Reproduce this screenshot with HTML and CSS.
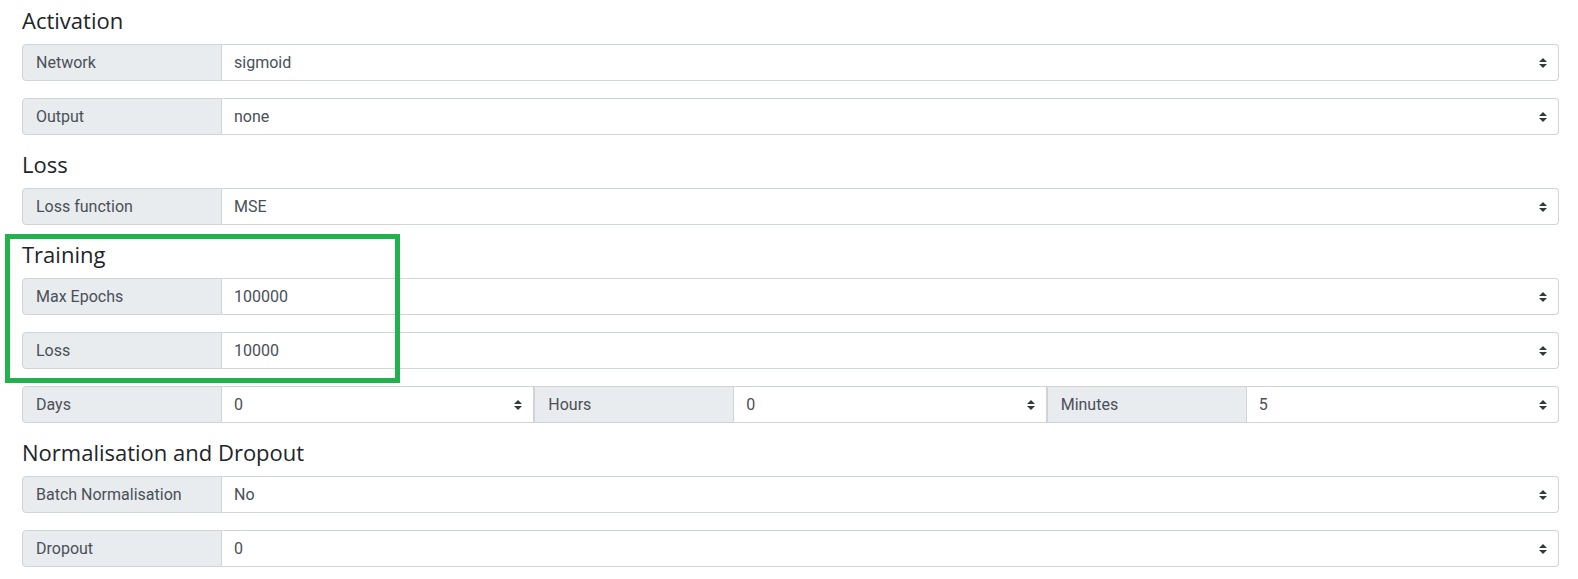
FILE: index.html
```html
<!DOCTYPE html>
<html lang="en">
<head>
<meta charset="utf-8">
<title>Network settings</title>
<link rel="stylesheet" href="styles.css">
</head>
<body>
<main class="form">
  <h5 class="section-title">Activation</h5>
  <div class="input-group">
    <span class="addon">Network</span>
    <div class="select-wrap last">
      <select class="custom-select"><option>sigmoid</option></select>
      <svg class="caret" viewBox="0 0 4 5" width="8" height="10"><path d="M2 0L0 2h4zm0 5L0 3h4z"/></svg>
    </div>
  </div>
  <div class="input-group">
    <span class="addon">Output</span>
    <div class="select-wrap last">
      <select class="custom-select"><option>none</option></select>
      <svg class="caret" viewBox="0 0 4 5" width="8" height="10"><path d="M2 0L0 2h4zm0 5L0 3h4z"/></svg>
    </div>
  </div>

  <h5 class="section-title">Loss</h5>
  <div class="input-group">
    <span class="addon">Loss function</span>
    <div class="select-wrap last">
      <select class="custom-select"><option>MSE</option></select>
      <svg class="caret" viewBox="0 0 4 5" width="8" height="10"><path d="M2 0L0 2h4zm0 5L0 3h4z"/></svg>
    </div>
  </div>

  <h5 class="section-title">Training</h5>
  <div class="input-group">
    <span class="addon">Max Epochs</span>
    <div class="select-wrap last">
      <select class="custom-select"><option>100000</option></select>
      <svg class="caret" viewBox="0 0 4 5" width="8" height="10"><path d="M2 0L0 2h4zm0 5L0 3h4z"/></svg>
    </div>
  </div>
  <div class="input-group">
    <span class="addon">Loss</span>
    <div class="select-wrap last">
      <select class="custom-select"><option>10000</option></select>
      <svg class="caret" viewBox="0 0 4 5" width="8" height="10"><path d="M2 0L0 2h4zm0 5L0 3h4z"/></svg>
    </div>
  </div>
  <div class="input-group triple">
    <span class="addon">Days</span>
    <div class="select-wrap">
      <select class="custom-select"><option>0</option></select>
      <svg class="caret" viewBox="0 0 4 5" width="8" height="10"><path d="M2 0L0 2h4zm0 5L0 3h4z"/></svg>
    </div>
    <span class="addon mid">Hours</span>
    <div class="select-wrap">
      <select class="custom-select"><option>0</option></select>
      <svg class="caret" viewBox="0 0 4 5" width="8" height="10"><path d="M2 0L0 2h4zm0 5L0 3h4z"/></svg>
    </div>
    <span class="addon mid">Minutes</span>
    <div class="select-wrap last">
      <select class="custom-select"><option>5</option></select>
      <svg class="caret" viewBox="0 0 4 5" width="8" height="10"><path d="M2 0L0 2h4zm0 5L0 3h4z"/></svg>
    </div>
  </div>

  <h5 class="section-title">Normalisation and Dropout</h5>
  <div class="input-group">
    <span class="addon">Batch Normalisation</span>
    <div class="select-wrap last">
      <select class="custom-select"><option>No</option></select>
      <svg class="caret" viewBox="0 0 4 5" width="8" height="10"><path d="M2 0L0 2h4zm0 5L0 3h4z"/></svg>
    </div>
  </div>
  <div class="input-group">
    <span class="addon">Dropout</span>
    <div class="select-wrap last">
      <select class="custom-select"><option>0</option></select>
      <svg class="caret" viewBox="0 0 4 5" width="8" height="10"><path d="M2 0L0 2h4zm0 5L0 3h4z"/></svg>
    </div>
  </div>
</main>
<div class="highlight" aria-hidden="true"></div>
</body>
</html>
```

FILE: styles.css
```css
* { box-sizing: border-box; }

html, body {
  background: #ffffff;
}

body {
  margin: 0;
  padding: 8px 19px 0 22px;
  position: relative;
  font-family: Roboto, "Liberation Sans", Arial, sans-serif;
  font-size: 16px;
  color: #495057;
}

.section-title {
  margin: 0 0 11px;
  font-family: "Open Sans", "Noto Sans", "Liberation Sans", sans-serif;
  font-weight: 500;
  font-size: 22px;
  line-height: 25px;
  color: #212529;
}

.input-group {
  display: flex;
  height: 37px;
  margin-bottom: 17px;
}

.input-group.triple {
  display: grid;
  grid-template-columns: 200px 1fr 200px 1fr 200px 1fr;
}

.addon {
  flex: 0 0 200px;
  width: 200px;
  display: flex;
  align-items: center;
  padding: 0 12px 0 13px;
  background: #e9ecef;
  border: 1px solid #ced4da;
  border-radius: 4px 0 0 4px;
  color: #495057;
  font-size: 16px;
  line-height: 24px;
  white-space: nowrap;
}

.addon.mid {
  border-radius: 0;
}

.select-wrap {
  position: relative;
  flex: 1 1 auto;
  min-width: 0;
}

.custom-select {
  appearance: none;
  -webkit-appearance: none;
  display: block;
  width: 100%;
  height: 37px;
  margin: 0;
  padding: 0 32px 0 12px;
  font-family: Roboto, "Liberation Sans", Arial, sans-serif;
  font-size: 16px;
  line-height: 24px;
  color: #495057;
  background: #ffffff;
  border: 1px solid #ced4da;
  border-left: 0;
  border-radius: 0;
  outline: none;
}

.select-wrap.last .custom-select {
  border-radius: 0 4px 4px 0;
}

.caret {
  position: absolute;
  right: 12px;
  top: 50%;
  transform: translateY(-50%);
  fill: #343a40;
  pointer-events: none;
}

.highlight {
  position: absolute;
  left: 5px;
  top: 234px;
  width: 395px;
  height: 149px;
  border: 5px solid #22b14c;
  pointer-events: none;
}
```
